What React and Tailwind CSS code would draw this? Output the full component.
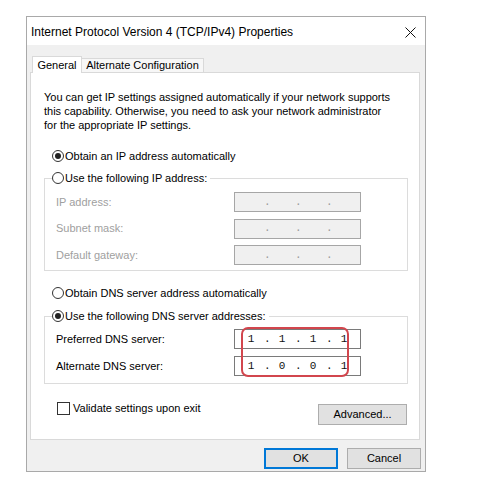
import React from "react";

const font = { fontFamily: '"Liberation Sans", Arial, sans-serif' };

function Radio({ checked }) {
  return (
    <span className="w-[12px] h-[12px] rounded-full border border-[#333] bg-white flex items-center justify-center shrink-0">
      {checked && <span className="w-[6px] h-[6px] rounded-full bg-[#222]" />}
    </span>
  );
}

function RadioRow({ checked, label }) {
  return (
    <div className="flex items-center h-[14px] gap-[1px] text-[11px] text-black">
      <Radio checked={checked} />
      <span>{label}</span>
    </div>
  );
}

function IpBox({ values, disabled }) {
  const cells = values || ["", "", "", ""];
  return (
    <div
      className={`h-[20px] w-[127px] flex items-center pl-[3px] border ${
        disabled ? "bg-[#f0f0f0] border-[#a6a6a6]" : "bg-white border-[#7a7a7a]"
      } text-[11px] text-[#111] font-['Liberation_Mono',monospace]`}
    >
      {cells.map((v, i) => (
        <React.Fragment key={i}>
          <span className="w-[26px] text-center">{v}</span>
          {i < 3 && (
            <span className={`w-[5px] text-center ${disabled ? "text-[#9a9a9a]" : ""}`}>.</span>
          )}
        </React.Fragment>
      ))}
    </div>
  );
}

function FieldRow({ label, disabled, values }) {
  return (
    <>
      <span className={`text-[11px] ${disabled ? "text-[#a0a0a0]" : "text-black"}`}>{label}</span>
      <IpBox disabled={disabled} values={values} />
    </>
  );
}

function WinButton({ children, primary, className = "" }) {
  return (
    <button
      className={`h-[21px] bg-[#e1e1e1] text-[11px] text-black ${
        primary ? "border-2 border-[#0078d7]" : "border border-[#adadad]"
      } ${className}`}
    >
      {children}
    </button>
  );
}

export default function App() {
  return (
    <div className="w-[484px] h-[485px] bg-white pt-[16px] pl-[26px]" style={font}>
      <div className="w-[400px] h-[456px] border border-[#a9a9a9] flex flex-col bg-[#f0f0f0]">
        {/* Title bar */}
        <div className="h-[28px] bg-white flex items-center justify-between pl-[4px] pr-[9px]">
          <span className="text-[12px] text-black pt-[2px]">
            Internet Protocol Version 4 (TCP/IPv4) Properties
          </span>
          <svg width="11" height="11" viewBox="0 0 11 11" className="mt-[2px]">
            <path d="M0.5 0.5 L10.5 10.5 M10.5 0.5 L0.5 10.5" stroke="#111" strokeWidth="1" />
          </svg>
        </div>

        {/* Body */}
        <div className="flex-1 flex flex-col pt-[11px] pl-[3px] pr-[5px]">
          {/* Tabs */}
          <div className="flex items-end h-[16px] relative z-10">
            <div className="ml-[2px] w-[50px] h-[17px] -mb-px bg-white border border-b-0 border-[#d9d9d9] text-[11px] text-black flex items-center justify-center">
              General
            </div>
            <div className="w-[122px] h-[14px] bg-[#f7f7f7] border border-b-0 border-l-0 border-[#d9d9d9] text-[11px] text-black flex items-center justify-center">
              Alternate Configuration
            </div>
          </div>

          {/* Panel */}
          <div className="h-[368px] bg-white border border-[#d9d9d9] flex flex-col pl-[13px] pr-[11px]">
            <p className="mt-[17px] text-[11px] leading-[14px] text-black">
              You can get IP settings assigned automatically if your network supports
              <br />
              this capability. Otherwise, you need to ask your network administrator
              <br />
              for the appropriate IP settings.
            </p>

            <div className="mt-[17px] pl-[8px]">
              <RadioRow checked label="Obtain an IP address automatically" />
            </div>

            <fieldset className="mt-[8px] border border-[#dcdcdc] pb-[5px]">
              <legend className="ml-[7px] pr-[3px]">
                <RadioRow label="Use the following IP address:" />
              </legend>
              <div className="mt-[7px] pl-[11px] grid grid-cols-[178px_127px] items-center gap-y-[6.5px]">
                <FieldRow disabled label="IP address:" />
                <FieldRow disabled label="Subnet mask:" />
                <FieldRow disabled label="Default gateway:" />
              </div>
            </fieldset>

            <div className="mt-[15px] pl-[8px]">
              <RadioRow label="Obtain DNS server address automatically" />
            </div>

            <fieldset className="mt-[9px] border border-[#dcdcdc] pb-[7px]">
              <legend className="ml-[7px] pr-[3px]">
                <RadioRow checked label="Use the following DNS server addresses:" />
              </legend>
              <div className="relative mt-[6px] pl-[11px] grid grid-cols-[178px_127px] items-center gap-y-[7px]">
                <FieldRow label="Preferred DNS server:" values={["1", "1", "1", "1"]} />
                <FieldRow label="Alternate DNS server:" values={["1", "0", "0", "1"]} />
                {/* highlight */}
                <div className="absolute left-[196px] top-[-2px] w-[108px] h-[50px] border-2 border-[#d2464d] rounded-[7px] pointer-events-none" />
              </div>
            </fieldset>

            <div className="flex items-start justify-between">
              <div className="mt-[17px] ml-[13px] flex items-center h-[14px] gap-[3px] text-[11px] text-black">
                <span className="w-[13px] h-[13px] border border-[#333] bg-white" />
                <span>Validate settings upon exit</span>
              </div>
              <WinButton className="mt-[20px] mr-[1px] w-[89px] h-[20px]">Advanced...</WinButton>
            </div>
          </div>

          {/* Dialog buttons */}
          <div className="mt-[8px] flex justify-end gap-[9px]">
            <WinButton primary className="w-[74px]">OK</WinButton>
            <WinButton className="w-[74px] mr-[-1px]">Cancel</WinButton>
          </div>
        </div>
      </div>
    </div>
  );
}
